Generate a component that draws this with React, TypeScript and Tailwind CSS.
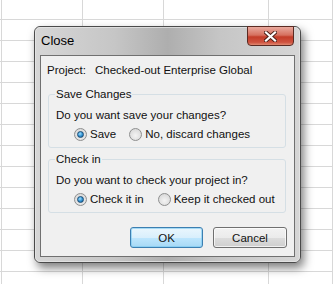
import React from "react";

const cols = ["w-[2px]", "w-[81px]", "w-[81px]", "w-[105px]", "flex-1"];

function Radio({ checked }: { checked?: boolean }) {
  return (
    <span className="flex h-[13px] w-[13px] shrink-0 items-center justify-center rounded-full border border-[#8e8f8f] bg-[radial-gradient(circle_at_50%_60%,#f4f4f4,#dcdcdc_70%,#cfcfcf)]">
      {checked && (
        <span className="h-[7px] w-[7px] rounded-full border border-[#1b4c74] bg-[radial-gradient(circle_at_40%_35%,#9fe0ff,#2f8fd0_55%,#145a8e)]" />
      )}
    </span>
  );
}

function GroupBox({ label, children }: { label: string; children: React.ReactNode }) {
  return (
    <div className="relative rounded-[3px] border border-[#d5dfe5] pb-[5px] pl-[7px] pt-[12px]">
      <span className="absolute left-[6px] top-[-9px] bg-[#f0f0f0] px-[1px] leading-[16px]">{label}</span>
      {children}
    </div>
  );
}

export default function App() {
  return (
    <div
      className="relative h-[284px] w-[333px] overflow-hidden whitespace-nowrap bg-white text-[11.5px] text-[#111]"
      style={{ fontFamily: '"Liberation Sans", Arial, sans-serif' }}
    >
      {/* spreadsheet grid behind */}
      <div className="flex flex-col">
        {Array.from({ length: 14 }).map((_, r) => (
          <div key={r} className={`flex ${r === 0 ? "h-[20px]" : "h-[21px]"}`}>
            {cols.map((c, i) => (
              <div key={i} className={`${c} border-b border-r border-[#d8d8d8]`} />
            ))}
          </div>
        ))}
      </div>

      {/* dialog window */}
      <div className="absolute left-[34px] top-[26px] flex h-[237px] w-[267px] flex-col rounded-[6px] border border-[#4a4a4a] bg-[linear-gradient(90deg,#d6d6d6,#c6c6c6_30%,#aeaeae_50%,#c6c6c6_70%,#d6d6d6)] px-[5px] pb-[5px] shadow-[3px_5px_10px_rgba(0,0,0,0.5)]">
        <div className="pointer-events-none absolute inset-0 rounded-[5px] border border-[#e8e8e8]/70" />
        <div className="relative flex h-[28px] items-center pl-[1px] text-[13px] leading-[16px] text-black">
          Close
          <div className="absolute right-[1px] top-[-1px] flex h-[20px] w-[47px] items-center justify-center rounded-b-[4px] border border-[#5a2a22] bg-[linear-gradient(180deg,#e9a99d_0%,#d6705f_45%,#c33c28_55%,#cf5340_85%,#e08a72_100%)]">
            <svg width="13" height="11" viewBox="0 0 13 11">
              <path d="M2 1.5 L11 9.5 M11 1.5 L2 9.5" stroke="#4a2018" strokeWidth="4" strokeLinecap="square" />
              <path d="M2 1.5 L11 9.5 M11 1.5 L2 9.5" stroke="#ffffff" strokeWidth="2.2" strokeLinecap="square" />
            </svg>
          </div>
        </div>

        <div className="flex flex-1 flex-col border border-[#707070] bg-[#f0f0f0] pb-[8px] pl-[7px] pr-[8px] pt-[6px] leading-[16px]">
          <div className="-ml-px flex h-[16px]">
            <span className="w-[48px]">Project:</span>
            <span>Checked-out Enterprise Global</span>
          </div>

          <div className="mt-[16px]">
            <GroupBox label="Save Changes">
              <div>Do you want save your changes?</div>
              <div className="mt-[3px] flex items-center pl-[18px]">
                <Radio checked />
                <span className="ml-[3px]">Save</span>
                <span className="ml-[13px]">
                  <Radio />
                </span>
                <span className="ml-[3px]">No, discard changes</span>
              </div>
            </GroupBox>
          </div>

          <div className="mt-[11px]">
            <GroupBox label="Check in">
              <div>Do you want to check your project in?</div>
              <div className="mt-[3px] flex items-center pl-[18px]">
                <Radio checked />
                <span className="ml-[3px]">Check it in</span>
                <span className="ml-[14px]">
                  <Radio />
                </span>
                <span className="ml-[3px]">Keep it checked out</span>
              </div>
            </GroupBox>
          </div>

          <div className="-mr-px mt-[14px] flex justify-end gap-[10px]">
            <button className="flex h-[21px] w-[73px] items-center justify-center rounded-[3px] border border-[#3c7fb1] bg-[linear-gradient(180deg,#eaf6fd_0%,#d9effc_50%,#bee6fd_51%,#a7d9f5_100%)] shadow-[inset_0_0_0_1px_rgba(120,200,240,0.6)]">
              OK
            </button>
            <button className="flex h-[21px] w-[74px] items-center justify-center rounded-[3px] border border-[#707070] bg-[linear-gradient(180deg,#f2f2f2_0%,#ebebeb_50%,#dddddd_51%,#cfcfcf_100%)] shadow-[inset_0_0_0_1px_rgba(255,255,255,0.7)]">
              Cancel
            </button>
          </div>
        </div>
      </div>
    </div>
  );
}
